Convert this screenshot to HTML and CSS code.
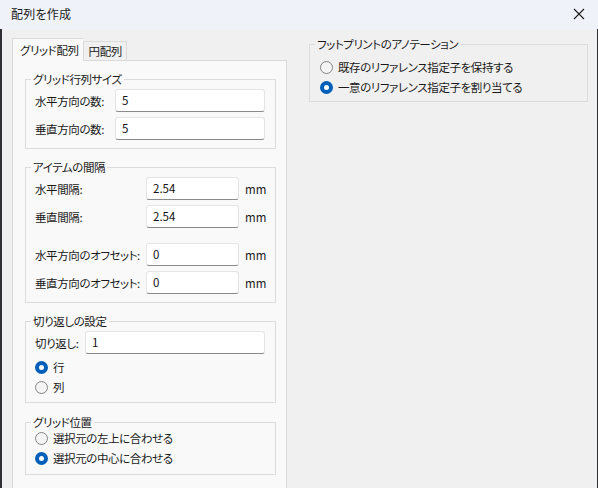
FILE: index.html
```html
<!DOCTYPE html>
<html lang="ja">
<head>
<meta charset="utf-8">
<title>配列を作成</title>
<link rel="stylesheet" href="styles.css">
</head>
<body>
<div class="window">
  <div class="titlebar">
    <span class="title">配列を作成</span>
    <svg class="close" width="12" height="12" viewBox="0 0 12 12"><path d="M1 1 L11 11 M11 1 L1 11" stroke="#1b1b1b" stroke-width="1.1" fill="none"/></svg>
  </div>
  <div class="content">
    <div class="left">
      <div class="tabs">
        <div class="tab active">グリッド配列</div>
        <div class="tab">円配列</div>
      </div>
      <div class="panel">
        <fieldset class="group g1">
          <legend>グリッド行列サイズ</legend>
          <div class="form f1">
            <label>水平方向の数:</label><div class="input">5</div>
            <label>垂直方向の数:</label><div class="input">5</div>
          </div>
        </fieldset>
        <fieldset class="group g2">
          <legend>アイテムの間隔</legend>
          <div class="form f2">
            <label>水平間隔:</label><div class="input">2.54</div><span class="unit">mm</span>
            <label>垂直間隔:</label><div class="input">2.54</div><span class="unit">mm</span>
            <label class="sp">水平方向のオフセット:</label><div class="input sp">0</div><span class="unit sp">mm</span>
            <label>垂直方向のオフセット:</label><div class="input">0</div><span class="unit">mm</span>
          </div>
        </fieldset>
        <fieldset class="group g3">
          <legend>切り返しの設定</legend>
          <div class="form f3">
            <label>切り返し:</label><div class="input">1</div>
          </div>
          <div class="radios r3">
            <div class="radio on"><span class="dot"></span>行</div>
            <div class="radio"><span class="dot"></span>列</div>
          </div>
        </fieldset>
        <fieldset class="group g4">
          <legend>グリッド位置</legend>
          <div class="radios r4">
            <div class="radio"><span class="dot"></span>選択元の左上に合わせる</div>
            <div class="radio on"><span class="dot"></span>選択元の中心に合わせる</div>
          </div>
        </fieldset>
      </div>
    </div>
    <div class="right">
      <fieldset class="group gr">
        <legend>フットプリントのアノテーション</legend>
        <div class="radios rr">
          <div class="radio"><span class="dot"></span>既存のリファレンス指定子を保持する</div>
          <div class="radio on"><span class="dot"></span>一意のリファレンス指定子を割り当てる</div>
        </div>
      </fieldset>
    </div>
  </div>
</div>
</body>
</html>
```

FILE: styles.css
```css
* { box-sizing: border-box; }
html, body { margin: 0; padding: 0; }
body {
  width: 598px;
  height: 488px;
  overflow: hidden;
  background: #f0f0f0;
  font-family: "Noto Sans CJK JP", "Noto Sans", sans-serif;
  font-size: 11.5px;
  letter-spacing: -0.4px;
  color: #1a1a1a;
  font-feature-settings: "palt";
}
.window { width: 598px; height: 488px; display: flex; flex-direction: column; }
.titlebar {
  height: 29px;
  flex: none;
  background: #eff3f9;
  display: flex;
  align-items: center;
  justify-content: space-between;
  padding: 0 13px 2px 11px;
}
.title { font-size: 12px; letter-spacing: 0.2px; }
.close { display: block; }
.content {
  flex: 1;
  display: flex;
  gap: 22px;
  padding: 7px 9px 0 10px;
  border-left: 2px solid #2e3033;
  border-right: 1px solid #2e3033;
  min-height: 0;
}
.left { width: 275px; flex: none; padding-top: 2px; display: flex; flex-direction: column; }
.right { width: 279px; flex: none; }
.tabs { display: flex; align-items: flex-end; height: 22px; position: relative; z-index: 1; }
.tab {
  height: 19px;
  padding: 0 4px 0 5px;
  border: 1px solid #dadada;
  border-bottom: none;
  background: #f0f0f0;
  line-height: 18px;
  font-size: 11.5px;
}
.tab.active {
  height: 23px;
  margin-bottom: -1px;
  background: #f9f9f9;
  padding: 2px 4px 0 7px;
  border-right: none;
}
.panel {
  flex: 1;
  background: #f9f9f9;
  border: 1px solid #dadada;
  border-bottom: none;
  padding: 10px 10px 0 12px;
}
.group {
  margin: 0;
  border: 1px solid #dcdcdc;
  border-radius: 0;
  padding: 2px 10px 8px 9px;
  min-width: 0;
}
.group legend {
  padding: 0 2px;
  margin-left: -4px;
  line-height: 16px;
  height: 16px;
}
.g2, .g3, .g4 { margin-top: 10px; }
.g4 { margin-top: 11px; padding-bottom: 6px; }
.form { display: grid; row-gap: 5px; align-items: center; }
.f1 { grid-template-columns: 80px 150px; }
.f2 { grid-template-columns: 111px 93px 1fr; }
.f3 { grid-template-columns: 50px 180px; }
.form label { white-space: nowrap; line-height: 16px; }
.f2 .sp { margin-top: 10px; }
.unit { padding-left: 6px; letter-spacing: 0; }
.input {
  height: 23px;
  background: #ffffff;
  border: 1px solid #e5e5e5;
  border-bottom: 1px solid #8a8a8a;
  border-radius: 3px;
  padding: 0 6px;
  line-height: 21px;
  color: #111;
  letter-spacing: 0;
}
.radios { display: flex; flex-direction: column; }
.radio { height: 20px; display: flex; align-items: center; gap: 5px; white-space: nowrap; }
.r3 { margin-top: 3px; }
.g3 { padding-bottom: 5px; }
.r4 { margin-top: -4px; }
.rr { margin-top: 3px; padding-left: 1px; }
.gr { padding-bottom: 4px; margin-top: 0; }
.dot {
  width: 13px;
  height: 13px;
  border-radius: 50%;
  border: 1px solid #858585;
  background: #f4f4f4;
  flex: none;
}
.radio.on .dot {
  border: 4px solid #005fb8;
  background: #ffffff;
}
```
